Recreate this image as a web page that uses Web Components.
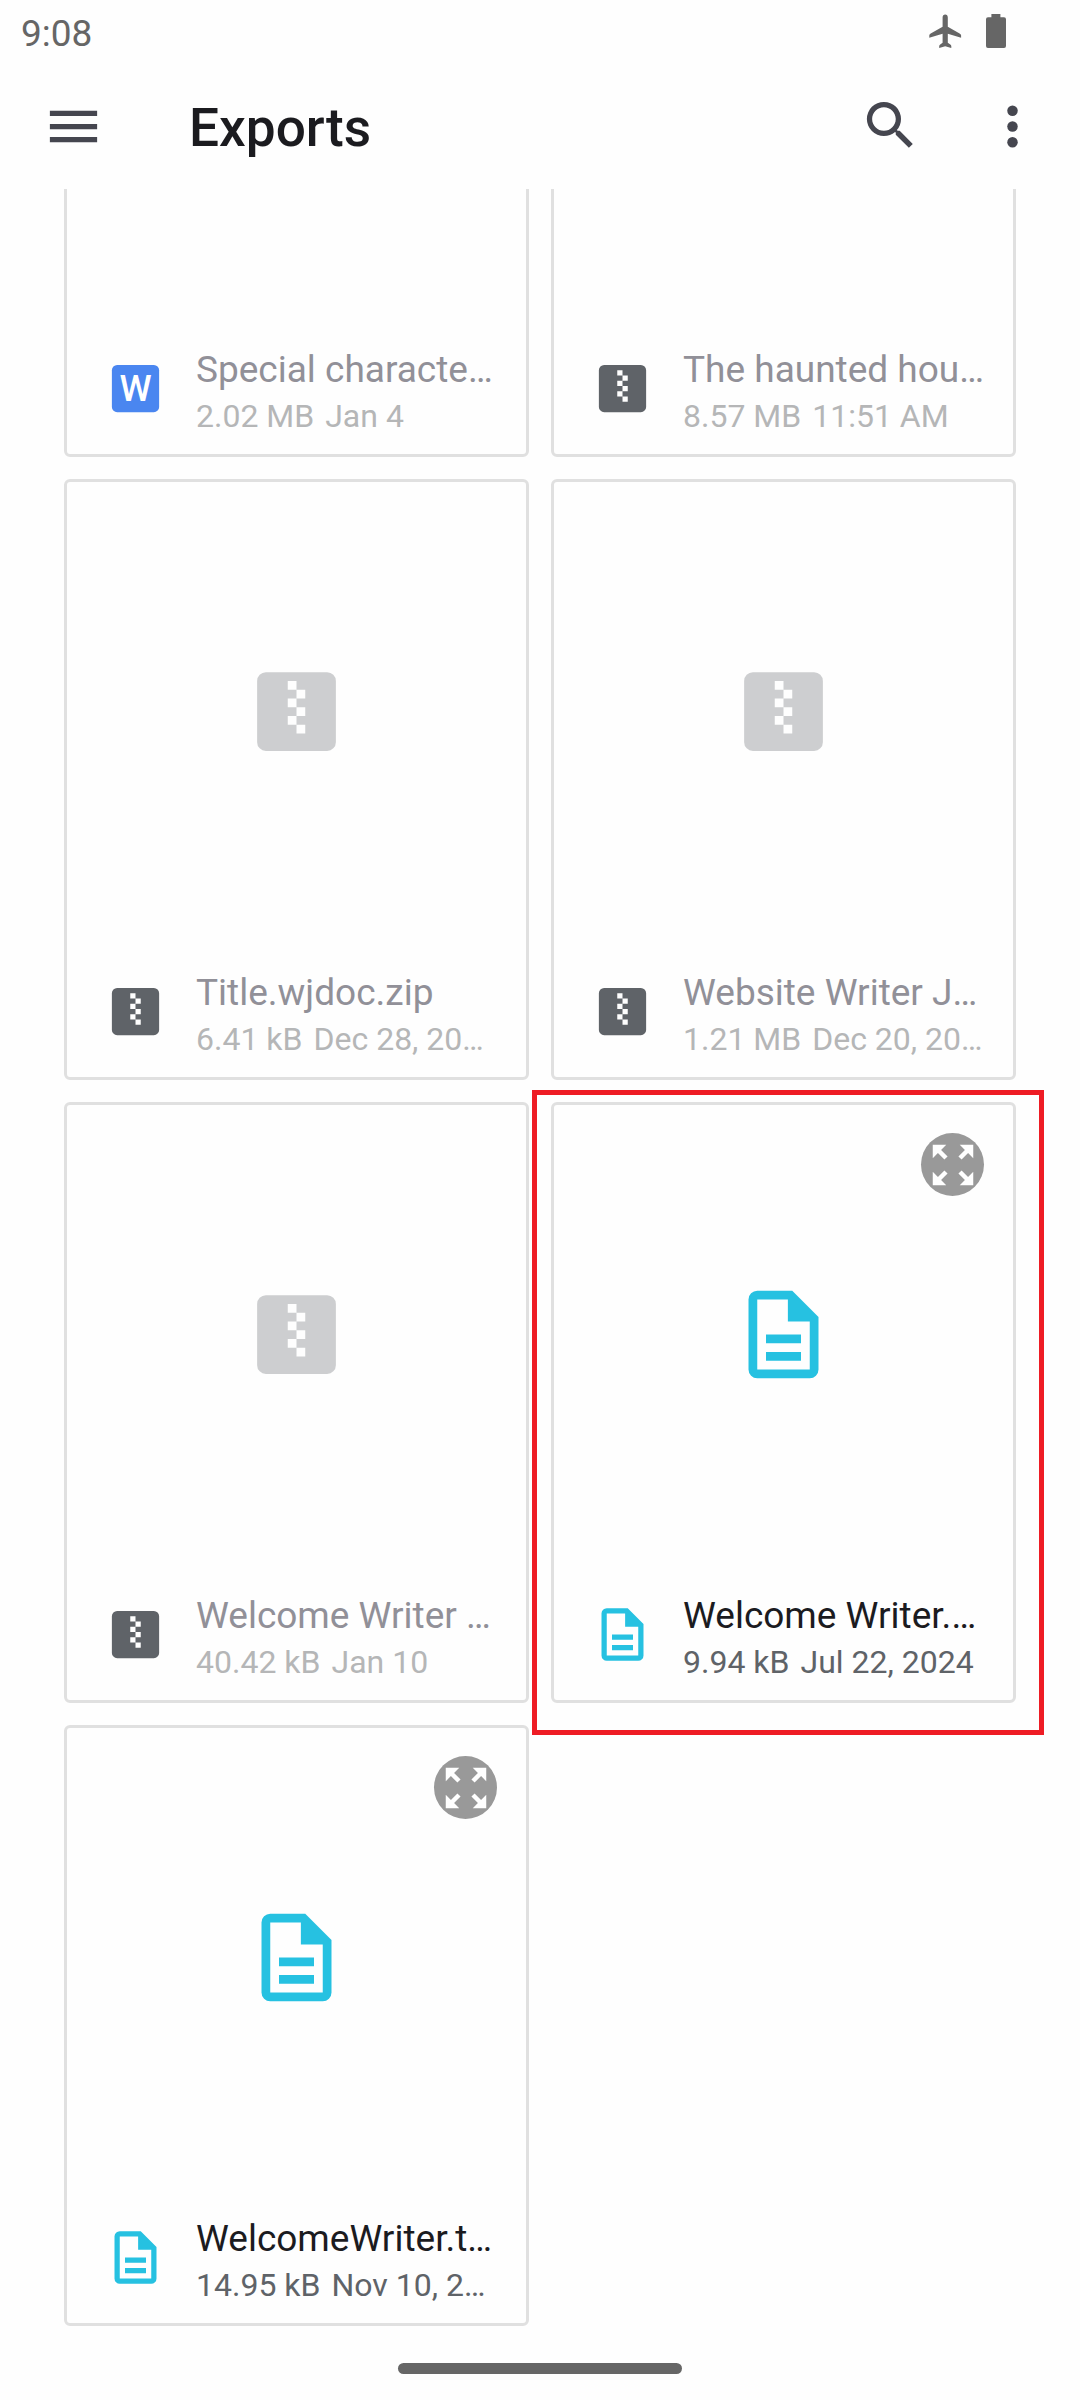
<!DOCTYPE html>
<html lang="en">
<head>
<meta charset="utf-8">
<title>Exports</title>
<style>
html,body{margin:0;padding:0;background:#fefefe}
body{font-family:Roboto,"Noto Sans",sans-serif}
</style>
</head>
<body>
<files-app></files-app>
<script>
const define = (name, html, setup) => customElements.define(name, class extends HTMLElement {
  connectedCallback() {
    if (this.shadowRoot) return;
    const root = this.attachShadow({mode: 'open'});
    root.innerHTML = html;
    if (setup) setup(this, root);
  }
});

const ICONS = {
  menu: '<path d="M3 18h18v-2H3zm0-5h18v-2H3zm0-7v2h18V6z"/>',
  search: '<path d="M15.5 14h-.79l-.28-.27A6.47 6.47 0 0 0 16 9.5 6.5 6.5 0 1 0 9.5 16c1.61 0 3.09-.59 4.23-1.57l.27.28v.79l5 4.99L20.49 19zm-6 0C7.01 14 5 11.99 5 9.5S7.01 5 9.5 5 14 7.01 14 9.5 11.99 14 9.5 14z"/>',
  more: '<circle cx="12" cy="6" r="2"/><circle cx="12" cy="12" r="2"/><circle cx="12" cy="18" r="2"/>',
  zip: '<path fill-rule="evenodd" d="M5 3h14a2 2 0 0 1 2 2v14a2 2 0 0 1-2 2H5a2 2 0 0 1-2-2V5a2 2 0 0 1 2-2zM10 5v2h2V5zM12 7v2h2V7zM10 9v2h2V9zM12 11v2h2v-2zM10 13v2h2v-2zM12 15v2h2v-2z"/>',
  doc: '<path fill-rule="evenodd" d="M6 2h8l6 6v12a2 2 0 0 1-2 2H6a2 2 0 0 1-2-2V4a2 2 0 0 1 2-2zM6 4v16h12V9h-5V4zM8 12h8v2H8zM8 16h8v2H8z"/>',
  word: '<rect x="3" y="3" width="18" height="18" rx="2"/><text x="12" y="16.95" text-anchor="middle" font-size="13.9" font-weight="500" style="fill:#fff">W</text>',
  expand: '<path d="M15 3l2.3 2.3-2.89 2.87 1.42 1.42L18.7 6.7 21 9V3zM3 9l2.3-2.3 2.87 2.89 1.42-1.42L6.7 5.3 9 3H3zm6 12l-2.3-2.3 2.89-2.87-1.42-1.42L5.3 17.3 3 15v6zm12-6l-2.3 2.3-2.87-2.89-1.42 1.42 2.89 2.87L15 21h6z"/>'
};

define('app-icon', `<style>
:host{display:block;width:63px;height:63px;flex:none}
svg{display:block;width:100%;height:100%;fill:currentColor}
</style><svg viewBox="0 0 24 24"></svg>`, (el, root) => {
  root.querySelector('svg').innerHTML = ICONS[el.getAttribute('name')] || '';
});

define('status-bar', `<style>
:host{display:flex;align-items:flex-start;justify-content:space-between;box-sizing:border-box;height:95px;padding:10px 74px 0 21px;color:#666}
.time{font-size:37px;line-height:46px;margin-top:1px}
.icons{display:flex;gap:24px;padding-top:4px}
svg{display:block;fill:currentColor}
</style>
<span class="time">9:08</span>
<div class="icons">
<svg width="33" height="35" viewBox="0 0 33 35"><path d="M16.2.6c1.6 0 2.6 1.3 2.6 2.9v9.2l11.8 6.7c1 .6 1.5 1.2 1.5 2.2v2.1L18.8 19.8v8.9l2.5 1.7c.7.5 1 1 1 1.8v1.7l-6.1-1.7-6 1.7v-1.7c0-.8.3-1.3 1-1.8l2.4-1.7v-8.9L.3 23.7v-2.1c0-1 .4-1.6 1.4-2.2l11.9-6.7V3.5c0-1.6 1-2.9 2.6-2.9z"/></svg>
<svg width="20" height="35" viewBox="0 0 20 35"><path d="M5.4 0h9v3.3H18a2 2 0 0 1 2 2V32a2 2 0 0 1-2 2H2a2 2 0 0 1-2-2V5.3a2 2 0 0 1 2-2h3.4z"/></svg>
</div>`);

define('app-bar', `<style>
:host{display:flex;align-items:flex-start;box-sizing:border-box;height:94px;padding:0 36px 0 42px;color:#45464f}
h1{flex:1;margin:2px 0 0 84px;font-size:53.2px;font-weight:500;line-height:63px;color:#1b1b1f}
.search{margin:-1px 59px 0 0}
</style>
<app-icon name="menu"></app-icon><h1><slot></slot></h1>
<app-icon class="search" name="search"></app-icon><app-icon name="more"></app-icon>`);

define('file-card', `<style>
:host{display:flex;flex-direction:column;justify-content:space-between;position:relative;box-sizing:border-box;height:601px;border:3px solid #e0e0e0;border-radius:6px;padding:177px 0 15px}
.thumb{width:105px;height:105px;align-self:center}
.zip{color:#5f6368}.word{color:#4a86f0}.doc{color:#26c1e1}
:host([dim]) .thumb{opacity:.3}
.info{display:flex;align-items:flex-start;height:92px;padding-left:37px;color:#1b1b1f;white-space:nowrap}
.texts{margin-left:29px}
.name{font-size:37px;line-height:46px}
.meta{display:flex;gap:11px;font-size:32px;line-height:46px;color:#5f6368}
.small{margin-top:10px}
:host([dim]) .name{color:#919098}
:host([dim]) .meta{color:#b5b6b7}
.expand{position:absolute;top:28px;right:29px;width:63px;height:63px;border-radius:50%;background:#999;color:#fff;display:flex;align-items:center;justify-content:center}
.expand app-icon{width:54px;height:54px}
:host([dim]) .expand{display:none}
.mark{display:none;position:absolute;top:-15px;left:-22px;right:-31px;bottom:-35px;border:5px solid #ee1c24}
:host([marked]) .mark{display:block}
</style>
<app-icon class="thumb"></app-icon>
<div class="info"><app-icon class="small"></app-icon>
<div class="texts"><div class="name"></div><div class="meta"><span class="size"></span><span class="date"></span></div></div></div>
<div class="expand"><app-icon name="expand"></app-icon></div>
<div class="mark"></div>`, (el, root) => {
  const type = el.getAttribute('type');
  for (const c of ['thumb', 'small']) {
    const old = root.querySelector('.' + c);
    const icon = document.createElement('app-icon');
    icon.className = c + ' ' + type;
    if (c === 'small' || !el.hasAttribute('blank')) icon.setAttribute('name', type);
    old.replaceWith(icon);
  }
  for (const k of ['name', 'size', 'date']) root.querySelector('.' + k).textContent = el.getAttribute(k);
});

define('file-grid', `<style>
:host{display:block;flex:1;min-height:0;overflow:hidden;padding:0 64px}
.grid{display:grid;grid-template-columns:1fr 1fr;gap:22px;margin-top:-333px}
</style><div class="grid"><slot></slot></div>`);

define('gesture-bar', `<style>
:host{display:flex;justify-content:center;height:37px;flex:none}
i{display:block;width:284px;height:11px;border-radius:6px;background:#666}
</style><i></i>`);

define('files-app', `<style>
:host{display:flex;flex-direction:column;width:1080px;height:2400px;overflow:hidden;background:#fefefe}
</style>
<status-bar></status-bar>
<app-bar>Exports</app-bar>
<file-grid>
<file-card dim blank type="word" name="Special characte…" size="2.02 MB" date="Jan 4"></file-card>
<file-card dim blank type="zip" name="The haunted hou…" size="8.57 MB" date="11:51 AM"></file-card>
<file-card dim type="zip" name="Title.wjdoc.zip" size="6.41 kB" date="Dec 28, 20…"></file-card>
<file-card dim type="zip" name="Website Writer J…" size="1.21 MB" date="Dec 20, 20…"></file-card>
<file-card dim type="zip" name="Welcome Writer …" size="40.42 kB" date="Jan 10"></file-card>
<file-card marked type="doc" name="Welcome Writer.…" size="9.94 kB" date="Jul 22, 2024"></file-card>
<file-card type="doc" name="WelcomeWriter.t…" size="14.95 kB" date="Nov 10, 2…"></file-card>
</file-grid>
<gesture-bar></gesture-bar>`);
</script>
</body>
</html>
